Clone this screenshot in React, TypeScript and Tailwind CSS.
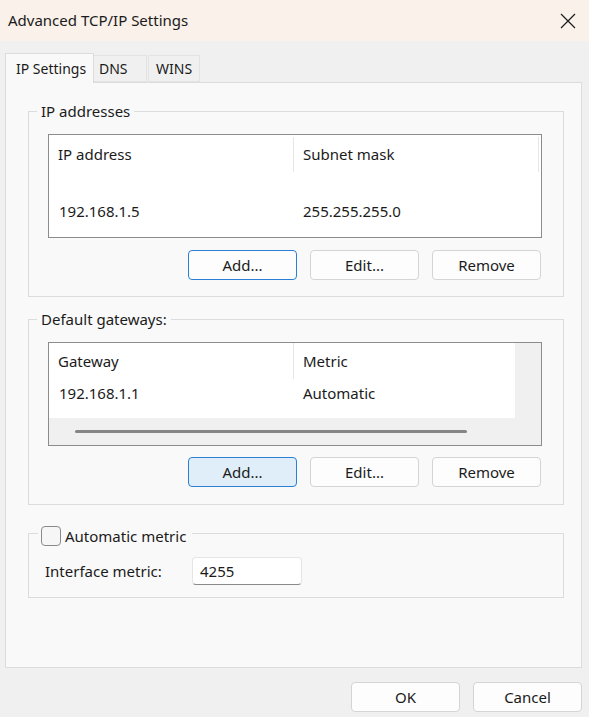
import React from 'react';

const font = { fontFamily: '"Noto Sans", "Open Sans", sans-serif' };

const Btn: React.FC<{ label: string; variant?: 'focus' | 'hover' | 'plain' }> = ({ label, variant = 'plain' }) => {
  const cls =
    variant === 'focus'
      ? 'border-[#2b7fd4] bg-[#fdfdfd] border-[1.5px]'
      : variant === 'hover'
      ? 'border-[#2b7fd4] bg-[#e0eef9] border-[1.5px]'
      : 'border-[#d4d4d4] bg-[#fdfdfd] border';
  return (
    <button className={`w-[109px] h-[30px] rounded-[4px] text-[15px] text-[#1b1b1b] flex items-center justify-center ${cls}`}>
      {label}
    </button>
  );
};

const GroupLabel: React.FC<{ children: React.ReactNode }> = ({ children }) => (
  <div className="absolute left-[8px] -top-[11px] px-[4px] bg-[#f9f9f9] text-[15px] leading-[20px] text-[#1b1b1b]">
    {children}
  </div>
);

export default function App() {
  return (
    <div className="w-[589px] h-[717px] bg-[#f0f0f0] flex flex-col text-[#1b1b1b]" style={font}>
      {/* title bar */}
      <div className="h-[41px] bg-[#f9f1ea] flex items-center justify-between pl-[8px] pr-[13px]">
        <span className="text-[15px]">Advanced TCP/IP Settings</span>
        <svg width="16" height="16" viewBox="0 0 16 16" className="text-[#1b1b1b]">
          <path d="M1 1L15 15M15 1L1 15" stroke="currentColor" strokeWidth="1.2" />
        </svg>
      </div>

      <div className="px-[5px] pt-[12px]">
        {/* tabs */}
        <div className="flex items-end h-[29px] text-[14px]">
          <div className="relative z-10 h-[30px] -mb-px w-[89px] bg-[#f9f9f9] border border-b-0 border-[#dcdcdc] pl-[10px] flex items-center">
            IP Settings
          </div>
          <div className="h-[27px] w-[53px] bg-[#f0f0f0] border border-l-0 border-[#e3e3e3] pl-[5px] flex items-center">
            DNS
          </div>
          <div className="h-[27px] w-[52px] ml-[1px] bg-[#f0f0f0] border border-[#e3e3e3] pl-[7px] flex items-center">
            WINS
          </div>
        </div>

        {/* panel */}
        <div className="h-[586px] w-[577px] bg-[#f9f9f9] border border-[#dcdcdc] pl-[22px] pt-[28px]">
          {/* IP addresses */}
          <div className="relative w-[536px] h-[186px] border border-[#dcdcdc] pl-[19px] pt-[22px]">
            <GroupLabel>IP addresses</GroupLabel>
            <div className="w-[494px] h-[104px] bg-white border border-[#8c8c8c] text-[15px]">
              <div className="flex h-[37px] items-center">
                <div className="w-[245px] pl-[9px] h-[35px] mt-[2px] flex items-center border-r border-[#e6e6e6]">IP address</div>
                <div className="w-[245px] pl-[9px] h-[35px] mt-[2px] flex items-center border-r border-[#e6e6e6]">Subnet mask</div>
              </div>
              <div className="flex mt-[28px]">
                <div className="w-[245px] pl-[10px]">192.168.1.5</div>
                <div className="w-[245px] pl-[9px]">255.255.255.0</div>
              </div>
            </div>
            <div className="flex justify-end gap-[13px] w-[494px] pr-[1px] mt-[12px]">
              <Btn label="Add..." variant="focus" />
              <Btn label="Edit..." />
              <Btn label="Remove" />
            </div>
          </div>

          {/* Default gateways */}
          <div className="relative w-[536px] h-[186px] border border-[#dcdcdc] pl-[19px] pt-[22px] mt-[22px]">
            <GroupLabel>Default gateways:</GroupLabel>
            <div className="w-[494px] h-[104px] bg-[#f0f0f0] border border-[#8c8c8c] text-[15px] flex flex-col">
              <div className="flex h-[75px]">
                <div className="w-[466px] bg-white">
                  <div className="flex h-[37px]">
                    <div className="w-[245px] pl-[9px] h-[36px] flex items-center border-r border-[#e6e6e6]">Gateway</div>
                    <div className="pl-[9px] h-[36px] flex items-center">Metric</div>
                  </div>
                  <div className="flex mt-[2px]">
                    <div className="w-[245px] pl-[10px]">192.168.1.1</div>
                    <div className="pl-[9px]">Automatic</div>
                  </div>
                </div>
              </div>
              <div className="flex-1 flex items-center pl-[26px]">
                <div className="w-[392px] h-[3px] rounded-full bg-[#858585]" />
              </div>
            </div>
            <div className="flex justify-end gap-[13px] w-[494px] pr-[1px] mt-[11px]">
              <Btn label="Add..." variant="hover" />
              <Btn label="Edit..." />
              <Btn label="Remove" />
            </div>
          </div>

          {/* Automatic metric */}
          <div className="relative w-[536px] h-[65px] border border-[#dcdcdc] mt-[28px] pl-[16px] pt-[23px] text-[15px]">
            <div className="absolute left-[9px] -top-[8px] pl-[3px] pr-[6px] bg-[#f9f9f9] flex items-center gap-[4px] h-[20px]">
              <span className="w-[20px] h-[20px] rounded-[4px] border border-[#8a8a8a] bg-[#f6f6f6]" />
              <span className="leading-[20px]">Automatic metric</span>
            </div>
            <div className="flex items-center">
              <span className="w-[147px]">Interface metric:</span>
              <div className="w-[110px] h-[28px] bg-white border border-[#e5e5e5] border-b-[#8a8a8a] rounded-[4px] pl-[7px] flex items-center">
                4255
              </div>
            </div>
          </div>
        </div>

        {/* bottom buttons */}
        <div className="flex justify-end gap-[13px] pr-[2px] mt-[14px]">
          <Btn label="OK" />
          <Btn label="Cancel" />
        </div>
      </div>
    </div>
  );
}
